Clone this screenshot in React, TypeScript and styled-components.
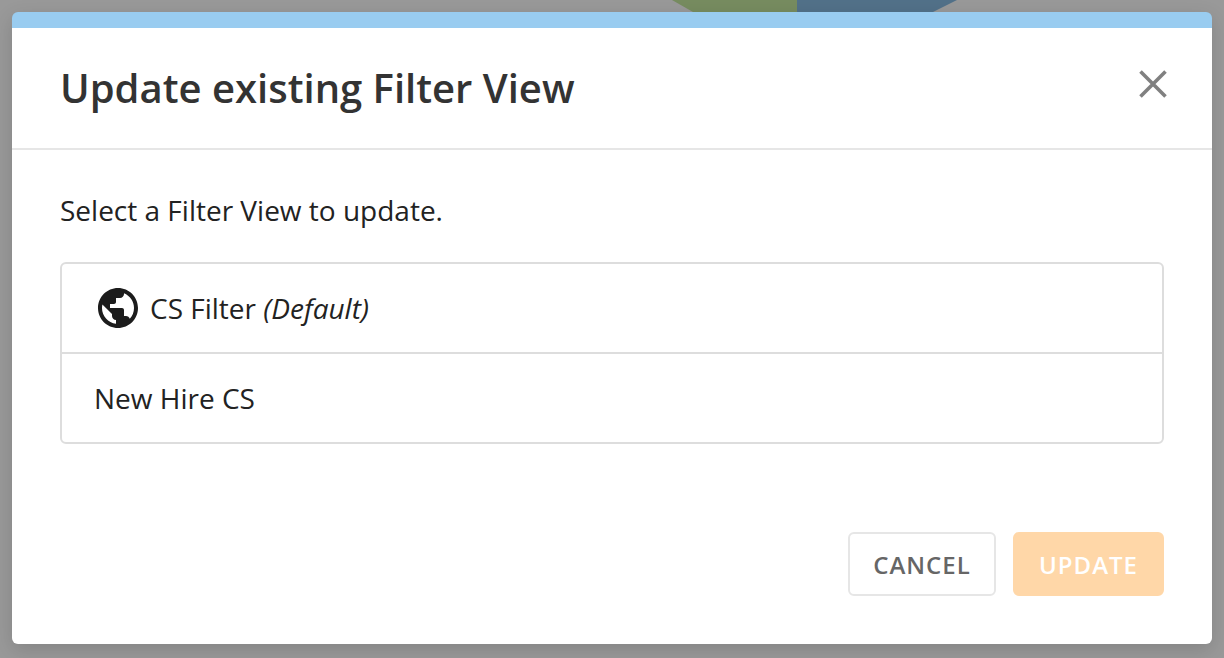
import styled, { createGlobalStyle } from "styled-components";
import { MdPublic } from "react-icons/md";

const GlobalStyle = createGlobalStyle`
  html, body {
    margin: 0;
    padding: 0;
    height: 100%;
    overflow: hidden;
    font-family: "Open Sans", "Liberation Sans", sans-serif;
  }
`;

const Page = styled.div`
  position: relative;
  box-sizing: border-box;
  width: 1224px;
  height: 658px;
  padding: 12px;
  background: #999999;
`;

const ChartPeek = styled.svg`
  position: absolute;
  top: 0;
  left: 650px;
`;

const Modal = styled.div`
  position: relative;
  display: flex;
  flex-direction: column;
  height: 632px;
  background: #ffffff;
  border-radius: 6px;
  border-top: 16px solid #99ccf0;
  box-sizing: border-box;
  box-shadow: 0 6px 20px rgba(0, 0, 0, 0.14);
`;

const Header = styled.div`
  display: flex;
  align-items: center;
  justify-content: space-between;
  box-sizing: border-box;
  height: 122px;
  padding: 0 43px 2px 48px;
  border-bottom: 2px solid #e6e6e6;
`;

const Title = styled.h1`
  margin: 0;
  font-size: 40px;
  font-weight: 600;
  color: #333333;
`;

const CloseButton = styled.button`
  display: flex;
  padding: 0;
  margin-bottom: 7px;
  border: none;
  background: none;
`;

const Body = styled.div`
  flex: 1;
  display: flex;
  flex-direction: column;
  padding: 43px 48px 48px;
`;

const Prompt = styled.p`
  margin: 0 0 35px;
  font-size: 28px;
  line-height: 34px;
  color: #222222;
`;

const ViewList = styled.div`
  border: 2px solid #dddddd;
  border-radius: 6px;
`;

const ViewRow = styled.div`
  display: flex;
  align-items: center;
  gap: 8px;
  box-sizing: border-box;
  height: 88px;
  padding-left: 32px;
  font-size: 28px;
  color: #222222;
  & + & {
    height: 90px;
    border-top: 2px solid #dddddd;
  }
`;

const Muted = styled.em`
  font-style: italic;
`;

const Footer = styled.div`
  display: flex;
  justify-content: flex-end;
  gap: 17px;
  margin-top: auto;
`;

const Button = styled.button<{ $primary?: boolean }>`
  box-sizing: border-box;
  height: 64px;
  width: ${(props) => (props.$primary ? "151px" : "148px")};
  border-radius: 6px;
  border: 2px solid ${(props) => (props.$primary ? "#ffd7a8" : "#e6e6e6")};
  background: ${(props) => (props.$primary ? "#ffd7a8" : "#ffffff")};
  color: ${(props) => (props.$primary ? "#ffffff" : "#666666")};
  font-family: inherit;
  font-size: 24px;
  font-weight: 600;
  letter-spacing: 1px;
  text-transform: uppercase;
`;

const App = () => {
  return (
    <Page>
      <GlobalStyle />
      <ChartPeek width="320" height="14" viewBox="0 0 320 14">
        <path d="M22 0 H147 V12 H43 Z" fill="#778c60" />
        <path d="M147 0 H307 L283 12 H147 Z" fill="#527189" />
      </ChartPeek>
      <Modal>
        <Header>
          <Title>Update existing Filter View</Title>
          <CloseButton aria-label="Close">
            <svg width="32" height="32" viewBox="0 0 32 32">
              <path
                d="M3.5 3.5 L28.5 28.5 M28.5 3.5 L3.5 28.5"
                stroke="#808080"
                strokeWidth="3.6"
                fill="none"
              />
            </svg>
          </CloseButton>
        </Header>
        <Body>
          <Prompt>Select a Filter View to update.</Prompt>
          <ViewList>
            <ViewRow>
              <MdPublic size={48} color="#1c1c1c" />
              <span>
                CS Filter <Muted>(Default)</Muted>
              </span>
            </ViewRow>
            <ViewRow>New Hire CS</ViewRow>
          </ViewList>
          <Footer>
            <Button>Cancel</Button>
            <Button $primary>Update</Button>
          </Footer>
        </Body>
      </Modal>
    </Page>
  );
};

export default App;
